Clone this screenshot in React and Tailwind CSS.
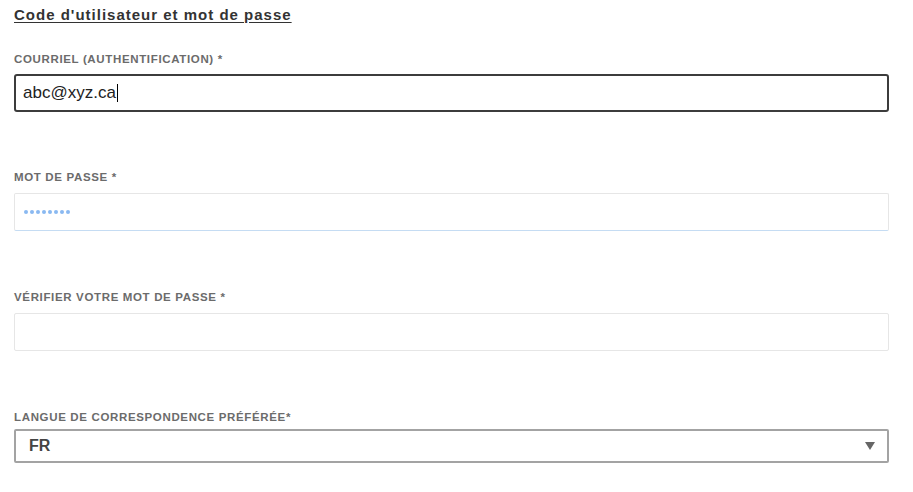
import React from "react";

function Label({ children, className = "" }) {
  return (
    <div className={"text-[11.5px] leading-[14px] font-bold tracking-[0.65px] text-[#6b6b6b] uppercase " + className}>
      {children}
    </div>
  );
}

export default function App() {
  return (
    <div className="w-[913px] h-[492px] bg-white font-['Liberation_Sans',Arial,sans-serif] overflow-hidden">
      <div className="ml-[14px] w-[875px] pt-[5px] flex flex-col">
        <h2 className="text-[15px] leading-[20px] font-bold tracking-[1px] text-[#333] underline underline-offset-[2px]">
          Code d'utilisateur et mot de passe
        </h2>

        <Label className="mt-[27px]">COURRIEL (AUTHENTIFICATION) *</Label>
        <div className="mt-[8px] h-[38px] border-2 border-[#3c3c3c] rounded-[3px] flex items-center pl-[7px] text-[17px] text-[#222]">
          <span>abc@xyz.ca</span>
          <span className="w-px h-[18px] bg-black ml-px" />
        </div>

        <Label className="mt-[58px]">MOT DE PASSE *</Label>
        <div className="mt-[9px] h-[38px] border border-[#e6e6e6] border-b-[#c5dcf3] rounded-[2px] flex items-center pl-[9px] gap-[2px]">
          {[0, 1, 2, 3, 4, 5, 6, 7].map((i) => (
            <span key={i} className="w-[4px] h-[4px] rounded-full bg-[#8ab9f1]" />
          ))}
        </div>

        <Label className="mt-[59px]">VÉRIFIER VOTRE MOT DE PASSE *</Label>
        <div className="mt-[9px] h-[38px] border border-[#e6e6e6] rounded-[2px]" />

        <Label className="mt-[59px]">LANGUE DE CORRESPONDENCE PRÉFÉRÉE*</Label>
        <div className="mt-[5px] h-[34px] border-2 border-[#a3a3a3] rounded-[2px] flex items-center justify-between pl-[13px] pr-[12px]">
          <span className="text-[16px] font-bold text-[#444]">FR</span>
          <svg width="10" height="8" viewBox="0 0 10 8">
            <polygon points="0,0 10,0 5,8" fill="#666" />
          </svg>
        </div>
      </div>
    </div>
  );
}
